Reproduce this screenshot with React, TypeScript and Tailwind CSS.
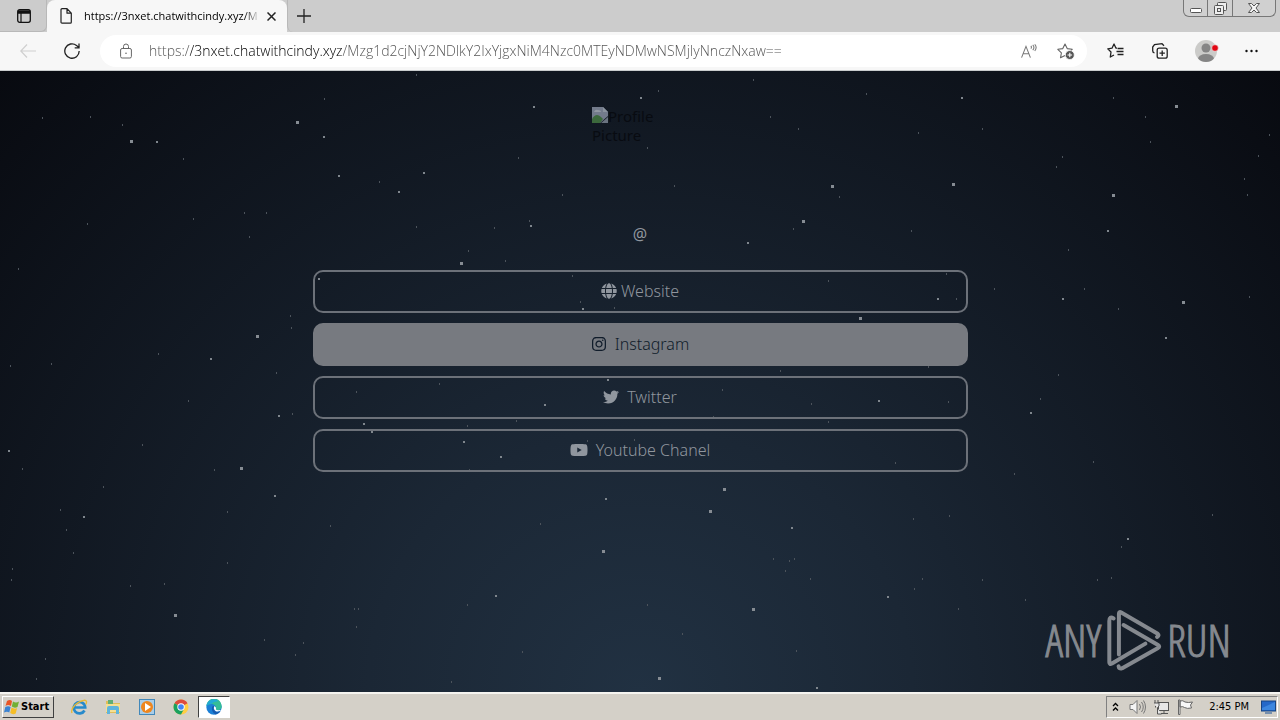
import type { ReactNode } from "react";
import { FaGlobe, FaInstagram, FaTwitter, FaYoutube } from "react-icons/fa";

type Point = [number, number];

const largeStars: Point[] = [
  [297, 51], [131, 70], [257, 265], [461, 192], [175, 544], [241, 397], [724, 418], [710, 440], [753, 538],
  [603, 480], [832, 115], [803, 150], [953, 113], [1176, 35], [1113, 124], [1183, 231], [860, 247], [659, 607],
];

const mediumStars: Point[] = [
  [157, 71], [324, 66], [339, 105], [399, 121], [424, 102], [534, 36], [531, 155], [319, 208], [583, 238],
  [211, 288], [748, 172], [962, 27], [1108, 160], [1063, 228], [938, 228], [1166, 267], [9, 380], [84, 446],
  [275, 425], [279, 345], [364, 353], [372, 361], [464, 371], [501, 386], [545, 334], [606, 428], [496, 525],
  [608, 309], [879, 330], [1031, 342], [792, 457], [888, 526], [1128, 468], [817, 617], [641, 27],
];

const smallStars: Point[] = [
  [416, 3], [324, 27], [42, 46], [90, 45], [122, 53], [183, 87], [87, 152], [193, 147], [244, 141], [266, 141],
  [249, 165], [18, 197], [290, 244], [291, 256], [158, 282], [51, 292], [10, 294], [276, 301], [518, 86],
  [562, 123], [379, 110], [416, 155], [494, 156], [529, 149], [468, 179], [505, 189], [572, 204], [580, 230],
  [614, 236], [753, 8], [658, 19], [866, 22], [770, 45], [798, 57], [918, 61], [982, 57], [1113, 26], [1145, 45],
  [1150, 70], [1269, 63], [1258, 84], [1062, 85], [1056, 95], [1244, 107], [1247, 123], [674, 114], [647, 76],
  [839, 125], [793, 157], [911, 159], [1068, 178], [828, 209], [946, 202], [956, 227], [994, 217], [1084, 217],
  [1118, 237], [1249, 225], [928, 295], [780, 299], [1058, 303], [188, 329], [142, 373], [22, 397], [214, 398],
  [292, 342], [103, 415], [60, 438], [66, 458], [73, 481], [12, 497], [11, 508], [227, 440], [227, 491],
  [330, 454], [130, 514], [164, 512], [354, 537], [358, 537], [356, 555], [264, 568], [303, 571], [295, 583],
  [45, 587], [36, 607], [467, 533], [522, 580], [451, 610], [540, 452], [439, 312], [356, 320], [467, 354],
  [516, 349], [469, 398], [587, 369], [634, 368], [722, 318], [811, 332], [948, 330], [1040, 327], [713, 345],
  [828, 350], [895, 391], [1093, 390], [1014, 402], [913, 447], [949, 444], [1212, 443], [773, 487], [789, 489],
  [794, 487], [785, 499], [810, 507], [922, 507], [914, 517], [982, 508], [1121, 475], [1097, 508], [1111, 506],
  [1025, 528], [958, 537], [647, 533], [682, 562], [796, 579],
];

function Starfield() {
  return (
    <svg aria-hidden="true" className="pointer-events-none absolute inset-0 h-full w-full">
      {smallStars.map(([x, y]) => (
        <rect key={`${x}-${y}`} x={x} y={y} width="1" height="2" fill="#4c535b" />
      ))}
      {mediumStars.map(([x, y]) => (
        <rect key={`${x}-${y}`} x={x - 1} y={y - 1} width="2" height="2" fill="#7f868d" />
      ))}
      {largeStars.map(([x, y]) => (
        <rect key={`${x}-${y}`} x={x - 1} y={y - 1} width="3" height="3" fill="#868c93" />
      ))}
    </svg>
  );
}

function TabStrip() {
  return (
    <div className="flex h-8 items-start justify-between bg-[#cccccc]">
      <div className="flex h-8 items-stretch">
        <button aria-label="Tab actions" className="flex w-[47px] items-center justify-center rounded-br-md border-r border-b border-[#b8b8b8] pl-0.5">
          <svg width="14" height="14" viewBox="0 0 14 14" fill="none" stroke="#111">
            <rect x="0.7" y="0.7" width="12.6" height="12.6" rx="2" strokeWidth="1.3" />
            <path d="M1 3h12" strokeWidth="3.5" />
            <path d="M4 4v9" strokeWidth="1.2" />
          </svg>
        </button>
        <div className="flex w-60 items-center rounded-t-lg bg-[#f7f7f7] pl-[13px]">
          <svg width="12" height="16" viewBox="0 0 12 16" fill="none" stroke="#222" strokeWidth="1.2" strokeLinejoin="round">
            <path d="M2 0.7h5l4.3 4.5v9a1 1 0 0 1-1 1H2a1 1 0 0 1-1-1V1.7a1 1 0 0 1 1-1z M7 0.7v4.500h4.300" />
          </svg>
          <span className="ml-3 w-[174px] overflow-hidden bg-[linear-gradient(90deg,#000_160px,transparent_176px)] bg-clip-text font-['Open_Sans',sans-serif] text-[11px] whitespace-nowrap text-transparent">
            https://3nxet.chatwithcindy.xyz/M
          </span>
          <button aria-label="Close tab" className="ml-[3px] flex h-5 w-5 items-center justify-center">
            <svg width="9" height="9" viewBox="0 0 9 9" stroke="#222" strokeWidth="1.5"><path d="M0.5 0.5l8 8M8.5 0.5l-8 8" /></svg>
          </button>
        </div>
        <button aria-label="New tab" className="flex w-9 items-center justify-start rounded-bl-md border-l border-[#b8b8b8] pl-[9px]">
          <svg width="14" height="14" viewBox="0 0 14 14" stroke="#222" strokeWidth="1.3"><path d="M7 0v14M0 7h14" /></svg>
        </button>
      </div>
      <div className="mr-1 flex h-[17px] overflow-hidden rounded-b-md border border-t-0 border-[#777] bg-[#d0d0d0]">
        <button aria-label="Minimize" className="flex w-6 items-center justify-center border-r border-[#777]">
          <svg width="12" height="10" viewBox="0 0 12 10" fill="#fff" stroke="#555"><rect x="0.5" y="5.5" width="11" height="4" rx="1" /></svg>
        </button>
        <button aria-label="Restore" className="flex w-[25px] items-center justify-center border-r border-[#777]">
          <svg width="13" height="13" viewBox="0 0 13 13" fill="#eee" stroke="#555">
            <rect x="3.5" y="0.5" width="9" height="8" rx="1" />
            <rect x="0.5" y="3.5" width="9" height="9" rx="1" />
            <rect x="3.5" y="6.5" width="3" height="3" />
          </svg>
        </button>
        <button aria-label="Close" className="flex w-[42px] items-center justify-center">
          <svg width="12" height="10" viewBox="0 0 12 10" fill="#f4f4f4" stroke="#555">
            <path d="M0.5 0.5h3L6 3l2.500-2.500h3L8 5l3.500 4.500h-3L6 7 3.500 9.500h-3L4 5z" />
          </svg>
        </button>
      </div>
    </div>
  );
}

function Toolbar() {
  return (
    <div className="flex h-[39px] items-center border-b border-[#c9cccd] bg-[#f7f7f7] pr-5 pl-5">
      <button aria-label="Back" disabled className="flex w-4 justify-center">
        <svg width="16" height="14" viewBox="0 0 16 14" fill="none" stroke="#cfcfcf" strokeWidth="1.2"><path d="M7 0.5L0.8 7 7 13.500M1 7h15" /></svg>
      </button>
      <button aria-label="Refresh" className="ml-7 flex w-4 justify-center">
        <svg width="16" height="16" viewBox="0 0 16 16" fill="none" stroke="#222" strokeWidth="1.3">
          <path d="M15.200 8A7.200 7.200 0 1 1 12.500 2.400L15 4.600M15 0.500v4.300h-4.300" />
        </svg>
      </button>
      <div className="ml-5 flex h-8 min-w-0 flex-1 items-center rounded-full bg-white pr-3 pl-5">
        <svg className="shrink-0" width="12" height="16" viewBox="0 0 12 16" fill="none" stroke="#666">
          <rect x="0.600" y="5.500" width="10.800" height="9.500" rx="1.500" />
          <path d="M3.500 5.500V3.500a2.500 2.500 0 0 1 5 0v2" />
          <circle cx="6" cy="10.300" r="0.800" fill="#666" stroke="none" />
        </svg>
        <input
          aria-label="Address"
          readOnly
          value="https://3nxet.chatwithcindy.xyz/Mzg1d2cjNjY2NDlkY2IxYjgxNiM4Nzc0MTEyNDMwNSMjIyNnczNxaw=="
          className="ml-[17px] min-w-0 flex-1 bg-[linear-gradient(90deg,#505050_41px,#000_41px,#000_193px,#505050_193px)] bg-clip-text font-['Open_Sans',sans-serif] text-sm font-light text-transparent outline-none"
        />
        <button aria-label="Read aloud" className="flex w-4 justify-center">
          <svg width="17" height="15" viewBox="0 0 17 15" fill="none" stroke="#777" strokeWidth="1.1">
            <path d="M0.600 14L5.300 2l4.700 12M2.300 10h6M10.500 4.500q1.200-1.500 0-3M12.500 6q2.500-3 0-5.500M14.600 7q3-3.800 0-7" />
          </svg>
        </button>
        <button aria-label="Add to favorites" className="ml-5 flex w-[18px] justify-center">
          <svg width="18" height="17" viewBox="0 0 18 17" fill="none" stroke="#666" strokeWidth="1.1">
            <path d="M8 1l2.200 4.600 5 .7-3.600 3.500.8 5L8 12.500l-4.500 2.300.9-5L0.800 6.300l5-.7z" strokeLinejoin="round" />
            <circle cx="12.800" cy="12" r="4.500" fill="#555" stroke="#fff" strokeWidth="0.800" />
            <path d="M12.800 9.700v4.600M10.500 12h4.600" stroke="#fff" />
          </svg>
        </button>
      </div>
      <div className="ml-5 flex items-center">
        <button aria-label="Favorites" className="flex w-[17px] justify-center">
          <svg width="17" height="16" viewBox="0 0 17 16" fill="none" stroke="#222" strokeWidth="1.300" strokeLinejoin="round">
            <path d="M10 5.200H9L7 1 5 5.200.800 5.900 4 9l-.7 5L7 12M10.500 5.500H16.500M9.500 8.500h7M10.500 11.500h6" />
          </svg>
        </button>
        <button aria-label="Collections" className="ml-7 flex w-4 justify-center">
          <svg width="16" height="16" viewBox="0 0 16 16" fill="none" stroke="#222" strokeWidth="1.300">
            <path d="M2.500 10A2.500 2.500 0 0 1 .700 7.500V4L2.500 1.500 10 .700l2 2" />
            <rect x="5.200" y="5.200" width="10" height="10" rx="2" fill="#f7f7f7" />
            <path d="M10.200 7.500v5.400M7.500 10.200h5.400" />
          </svg>
        </button>
        <button aria-label="Profile" className="ml-[27px] flex w-6 justify-center">
          <svg width="24" height="22" viewBox="0 0 24 22">
            <defs><clipPath id="avatar"><circle cx="11" cy="11" r="11" /></clipPath></defs>
            <circle cx="11" cy="11" r="11" fill="#cbcbc9" />
            <circle cx="11" cy="8" r="4.500" fill="#858585" />
            <ellipse cx="11" cy="19" rx="8" ry="5" fill="#858585" clipPath="url(#avatar)" />
            <circle cx="20" cy="8" r="3.300" fill="#e10713" stroke="#eee" strokeWidth="0.600" />
          </svg>
        </button>
        <button aria-label="Settings and more" className="ml-6 flex w-[17px] justify-center">
          <svg width="13" height="4" viewBox="0 0 13 4" fill="#111"><circle cx="1.500" cy="2" r="1.200" /><circle cx="6.500" cy="2" r="1.200" /><circle cx="11.500" cy="2" r="1.200" /></svg>
        </button>
      </div>
    </div>
  );
}

function LinkButton({ icon, label, filled = false, tight = false }: { icon: ReactNode; label: string; filled?: boolean; tight?: boolean }) {
  return (
    <a
      href="#"
      className={`flex h-[43px] items-center justify-center rounded-[10px] border-2 pb-0.5 font-['Noto_Sans',sans-serif] text-base font-light ${tight ? "gap-1" : "gap-2"} ${
        filled ? "border-[#777a80] bg-[#777a80] text-[#101c2a]" : "border-[#6c7179] text-[#90969e]"
      }`}
    >
      {icon}
      <span>{label}</span>
    </a>
  );
}

function Watermark() {
  return (
    <div className="absolute right-[49px] bottom-5 flex h-16 items-center gap-1 font-['Open_Sans_Condensed_Light','Noto_Sans_ExtraCondensed_Light','Noto_Sans_ExtraCondensed','Open_Sans_Condensed',sans-serif] text-[44px] leading-none font-light text-[#85898f] [-webkit-text-stroke:1px_#85898f]">
      <span>ANY</span>
      <svg aria-hidden="true" width="58" height="65" viewBox="265 40 175 195" fill="none" stroke="#85898f" strokeWidth="12" strokeLinejoin="round" strokeLinecap="round">
        <path d="M307 180V57q0-8 7-4l110 64q6 5-2 10" />
        <path d="M291 71q-13-8-13 8v124q0 8 8 4l101-60" />
        <path d="M321 91l104 60q7 4 0 9l-108 61q-10 4-11-6" />
      </svg>
      <span>RUN</span>
    </div>
  );
}

function ProfilePage() {
  return (
    <main className="relative flex-1 overflow-hidden bg-[radial-gradient(ellipse_at_bottom,#213142_0%,#1b2735_30%,#080a10_100%)] px-4 pt-9 pb-20">
      <Starfield />
      <div className="relative mx-auto max-w-[655px]">
        <div role="img" aria-label="Profile Picture" className="mx-auto h-24 w-24 font-['Noto_Sans',sans-serif] text-[15px] leading-[19px] text-[#080b11]">
          <svg className="float-left" width="16" height="16" viewBox="0 0 16 16">
            <path d="M0 0h11l5 5v4L8 16H0z" fill="#737b8b" />
            <path d="M0 16v-4q4-7 9-2l2 2-3 4z" fill="#3c693c" />
            <path d="M2 5q1-3 4-2 3 0 3 2z" fill="#9198a2" />
            <path d="M16 10v6H9z" fill="#6a7380" />
            <path d="M11 0v5h5z" fill="#8b939e" />
          </svg>
          Profile
          <br />
          Picture
        </div>
        <h1 className="mt-4 text-center font-['Noto_Sans',sans-serif] text-base leading-[30px] text-[#90969e]">@</h1>
        <nav aria-label="Profile links" className="mt-[21px] flex flex-col gap-[10px]">
          <LinkButton icon={<FaGlobe size={16} />} label="Website" tight />
          <LinkButton icon={<FaInstagram size={16} />} label="Instagram" filled />
          <LinkButton icon={<FaTwitter size={16} />} label="Twitter" />
          <LinkButton icon={<FaYoutube size={18} />} label="Youtube Chanel" />
        </nav>
      </div>
      <Watermark />
    </main>
  );
}

function Taskbar() {
  return (
    <footer className="flex h-7 items-center justify-between border-t-2 border-[#f5f4f0] bg-[#d4d0c8] font-['DejaVu_Sans_Condensed','DejaVu_Sans',sans-serif]">
      <div className="flex items-center">
        <button className="ml-0.5 flex h-[22px] w-[52px] items-center gap-px border border-t-white border-r-[#404040] border-b-[#404040] border-l-white pl-px text-[11px] font-bold text-black">
          <svg className="shrink-0" width="16" height="16" viewBox="0 0 16 16">
            <path d="M3 2q3-2 5 0L7 7Q4 5 1.500 7z" fill="#e95525" />
            <path d="M9 2.500q3 2 6 0L13.500 8q-3 1.500-5.700-.5z" fill="#72af35" />
            <path d="M1.300 8q3-1.500 5.300 0L5.300 13.500Q3 12 0 13.500z" fill="#3b83d2" />
            <path d="M7.600 8.500q3 2 5.500.500L11.700 14.500q-3 1.500-5.500-.5z" fill="#f5bd25" />
          </svg>
          Start
        </button>
        <div className="ml-[9px] flex items-center gap-px">
          <button aria-label="Internet Explorer" className="flex h-[22px] w-[33px] items-center justify-center">
            <svg width="17" height="16" viewBox="0 0 17 16" fill="none">
              <path d="M13.500 11.500A5.700 5.700 0 1 1 14.200 8.500H4" stroke="#278acb" strokeWidth="2.700" />
              <path d="M1 14C-1 9 7 2 13 1.300c3-.3 3 2 1.800 4" stroke="#e7b936" strokeWidth="1.300" />
            </svg>
          </button>
          <button aria-label="File Explorer" className="flex h-[22px] w-8 items-center justify-center">
            <svg width="16" height="16" viewBox="0 0 16 16">
              <path d="M1 2h6l1 2h7v10H1z" fill="#e1bd58" />
              <path d="M3 1h5v5H3z" fill="#61ae73" />
              <path d="M1 5h14v8H1z" fill="#f5df92" />
              <path d="M2 15V9q0-2 2-2h8q2 0 2 2v6h-3v-4H5v4z" fill="#5fb4dc" />
            </svg>
          </button>
          <button aria-label="Media Player" className="flex h-[22px] w-[33px] items-center justify-center">
            <svg width="16" height="16" viewBox="0 0 16 16">
              <rect x="0.500" y="0.500" width="15" height="15" fill="#a9cde8" stroke="#4288ba" />
              <circle cx="8" cy="8" r="6" fill="#ee861f" />
              <path d="M6 4l6 4-6 4z" fill="#fff" />
            </svg>
          </button>
          <button aria-label="Chrome" className="flex h-[22px] w-[33px] items-center justify-center">
            <svg width="16" height="16" viewBox="0 0 16 16">
              <circle cx="8" cy="8" r="7.500" fill="#ffce44" />
              <path d="M8 8L1.500 4.300A7.500 7.500 0 0 1 14.500 4.300z" fill="#dd4b3e" />
              <path d="M8 8L1.500 4.300A7.500 7.500 0 0 0 8 15.500L11 10z" fill="#1aa15f" />
              <circle cx="8" cy="8" r="3.700" fill="#fff" />
              <circle cx="8" cy="8" r="2.800" fill="#4285f4" />
            </svg>
          </button>
          <button aria-label="Edge" className="flex h-[22px] w-8 items-center justify-center border border-t-[#404040] border-r-white border-b-white border-l-[#404040] bg-white">
            <svg width="16" height="16" viewBox="0 0 16 16">
              <circle cx="8" cy="8" r="7.700" fill="#1b7fd6" />
              <path d="M.300 7A7.700 7.700 0 0 1 15.700 7.500c0 3-3 4-6 3.500 1.500-3-1-6-4.500-6Q2 5 .300 7z" fill="#35bd97" />
              <path d="M.300 7A7.700 7.700 0 0 1 8 .300q3 0 4.500 2Q8 2 5.200 5 2 5 .300 7z" fill="#22a9d6" />
              <path d="M6 8Q5 13 9.500 15.500 13 15 14.500 12 10 13.500 8 11 7 9.500 8.500 7.500 7 6.500 6 8z" fill="#155bb0" />
              <path d="M8.500 7Q6.800 9.500 9.500 12 12.500 13.500 16 10.500V13Q16 10 12.500 11.300 10.500 11.300 9.900 10.500q1-2-1.400-3.500z" fill="#fff" />
            </svg>
          </button>
        </div>
      </div>
      <div className="mr-0.5 flex h-[22px] items-center border border-t-[#808080] border-r-white border-b-white border-l-[#808080] pr-px pl-[5px] text-[11px] text-black">
        <button aria-label="Show hidden icons" className="w-2">
          <svg width="7" height="10" viewBox="0 0 7 10" fill="none" stroke="#000" strokeWidth="1.300"><path d="M1 4l2.500-2.500L6 4M1 8.500L3.500 6 6 8.500" /></svg>
        </button>
        <svg className="ml-[9px]" aria-hidden="true" width="17" height="16" viewBox="0 0 17 16" fill="#f4f4f4" stroke="#777">
          <path d="M1 5.500h3l4-4v13l-4-4H1z" /><path d="M10.500 5q2 3 0 6M12.500 3q3.500 5 0 10M14.500 1.500q4 6.500 0 13" fill="none" />
        </svg>
        <svg className="ml-[7px]" aria-hidden="true" width="17" height="16" viewBox="0 0 17 16" fill="#e7e7e7" stroke="#555">
          <rect x="5.500" y="3.500" width="10" height="8" /><path d="M8 14.500h7M11 12v2M2 1v3M5 1v3M1 4h5v3L4.500 8.500V15h4M2.500 8.500V7" />
        </svg>
        <svg className="ml-[7px]" aria-hidden="true" width="17" height="16" viewBox="0 0 17 16" fill="#f8f8f8" stroke="#666">
          <path d="M1.500 1v14.500h1.500V1zM3 2q3-1 5 1 3 1 7.500 0l-2 3 1 3Q10 10 7.500 8.500 6 7 3 8z" />
        </svg>
        <time className="ml-[15px]">2:45 PM</time>
        <svg className="ml-3" aria-hidden="true" width="15" height="15" viewBox="0 0 15 15">
          <rect x="0.500" y="1" width="14" height="10" fill="#2468c8" stroke="#174582" />
          <path d="M1 8L14 2v8H1z" fill="#3c87df" /><path d="M4 12h7v2H4z" fill="#7790ae" />
        </svg>
      </div>
    </footer>
  );
}

export default function App() {
  return (
    <div className="flex min-h-screen flex-col">
      <header>
        <TabStrip />
        <Toolbar />
      </header>
      <ProfilePage />
      <Taskbar />
    </div>
  );
}
